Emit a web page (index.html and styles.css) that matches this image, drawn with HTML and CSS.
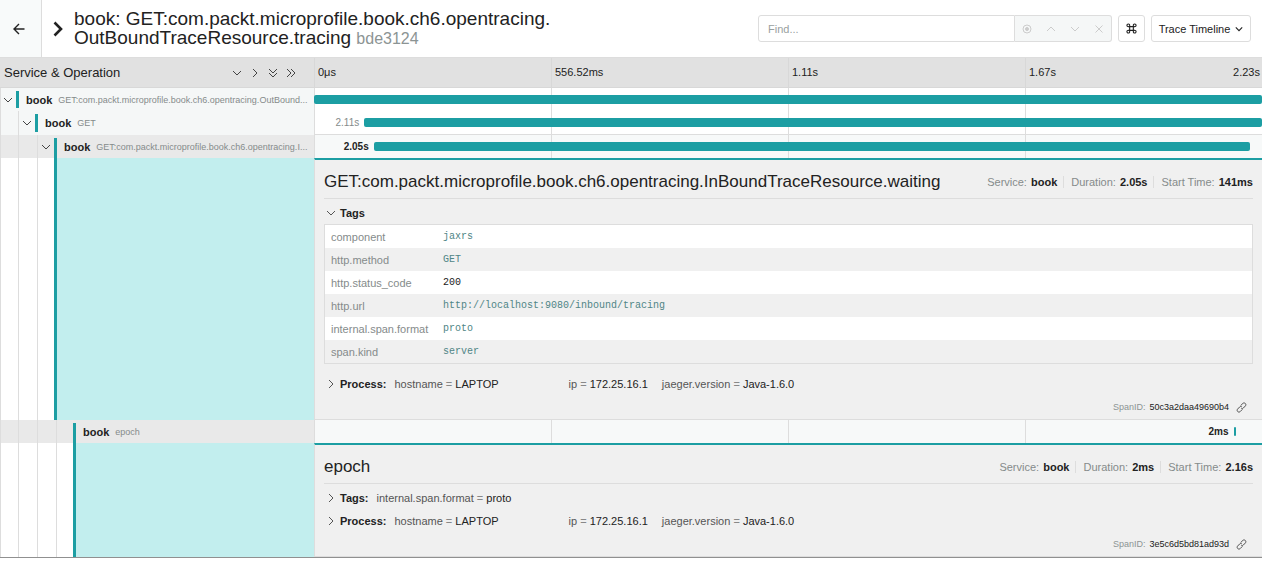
FILE: index.html
```html
<!DOCTYPE html>
<html lang="en">
<head>
<meta charset="utf-8">
<title>Trace bde3124</title>
<link rel="stylesheet" href="styles.css">
</head>
<body>
<svg class="sprite" aria-hidden="true">
  <symbol id="down" viewBox="0 0 10 10"><path d="M1 3l4 4 4-4"/></symbol>
  <symbol id="up" viewBox="0 0 10 10"><path d="M1 7l4-4 4 4"/></symbol>
  <symbol id="right" viewBox="0 0 10 10"><path d="M3 1l4 4-4 4"/></symbol>
  <symbol id="ddown" viewBox="0 0 10 10"><path d="M1 1l4 4 4-4M1 5l4 4 4-4"/></symbol>
  <symbol id="dright" viewBox="0 0 10 10"><path d="M1 1l4 4-4 4M5 1l4 4-4 4"/></symbol>
  <symbol id="link" viewBox="0 0 12 12"><path d="M5 4l2.500-2.500c1.800-1.500 4.300.8 2.800 2.700L8 6.600c-.8.700-1.700.7-2.400.1M7 8l-2.500 2.500c-1.800 1.500-4.300-.8-2.800-2.700L4 5.400c.8-.7 1.700-.7 2.400-.1"/></symbol>
</svg>
<header class="topbar">
  <a class="back" href="#" aria-label="Back"><svg class="icon-back" viewBox="0 0 12 12"><path d="M11.500 6H1M6 1L1 6l5 5"/></svg></a>
  <button class="expand" aria-label="Show trace details"><svg viewBox="0 0 10 16"><path d="M1.500 1.500L8 8l-6.500 6.500"/></svg></button>
  <h1 class="title">book: GET:com.packt.microprofile.book.ch6.opentracing.<wbr>OutBoundTraceResource.tracing <small class="trace-id">bde3124</small></h1>
  <div class="search">
    <input class="find" type="text" placeholder="Find..." aria-label="Find">
    <div class="find-actions">
      <button disabled aria-label="Focus matches"><svg viewBox="0 0 10 10"><circle cx="5" cy="5" r="4"/><circle class="dot" cx="5" cy="5" r="1.500"/></svg></button>
      <button disabled aria-label="Previous"><svg><use href="#up"/></svg></button>
      <button disabled aria-label="Next"><svg><use href="#down"/></svg></button>
      <button disabled aria-label="Clear"><svg viewBox="0 0 10 10"><path d="M1.500 1.500l7 7M8.500 1.500l-7 7"/></svg></button>
    </div>
  </div>
  <button class="btn keys" aria-label="Keyboard shortcuts"><svg viewBox="0 0 12 12"><path d="M4 4h4v4H4zM4 4H2.700A1.500 1.500 0 1 1 4 2.700zM8 4V2.700A1.500 1.500 0 1 1 9.300 4zM8 8h1.300A1.500 1.500 0 1 1 8 9.300zM4 8v1.300A1.500 1.500 0 1 1 2.700 8z"/></svg></button>
  <button class="btn view">Trace Timeline <svg><use href="#down"/></svg></button>
</header>

<main class="trace">
  <div class="row columns">
    <div class="name-head">
      <h2>Service &amp; Operation</h2>
      <div class="collapsers">
        <button aria-label="Expand one level"><svg><use href="#down"/></svg></button>
        <button aria-label="Collapse one level"><svg><use href="#right"/></svg></button>
        <button aria-label="Expand all"><svg><use href="#ddown"/></svg></button>
        <button aria-label="Collapse all"><svg><use href="#dright"/></svg></button>
      </div>
    </div>
    <div class="ticks"><span>0μs</span><span>556.52ms</span><span>1.11s</span><span class="last">1.67s<span>2.23s</span></span></div>
  </div>

  <div class="row span">
    <div class="name">
      <button class="toggle" aria-label="Collapse span"><svg><use href="#down"/></svg></button><i class="mark"></i>
      <a class="label" href="#"><b>book</b><small>GET:com.packt.microprofile.book.ch6.opentracing.OutBound...</small></a>
    </div>
    <div class="lane"><div class="bar" style="width:100%"></div></div>
  </div>
  <div class="row span ruled">
    <div class="name">
      <i class="guide"></i><button class="toggle" aria-label="Collapse span"><svg><use href="#down"/></svg></button><i class="mark"></i>
      <a class="label" href="#"><b>book</b><small>GET</small></a>
    </div>
    <div class="lane"><div class="lead" style="width:5.3%">2.11s</div><div class="bar" style="width:94.7%"></div></div>
  </div>
  <div class="row span open">
    <div class="name">
      <i class="guide"></i><i class="guide"></i><button class="toggle" aria-label="Collapse span"><svg><use href="#down"/></svg></button><i class="mark"></i>
      <a class="label" href="#"><b>book</b><small>GET:com.packt.microprofile.book.ch6.opentracing.I...</small></a>
    </div>
    <div class="lane"><div class="lead" style="width:6.3%">2.05s</div><div class="bar" style="width:92.4%"></div></div>
  </div>

  <div class="row detail-row">
    <div class="name detail-name"><i class="guide"></i><i class="guide"></i><i class="toggle"></i><i class="mark"></i><div class="tint"></div></div>
    <section class="detail">
      <div class="detail-head">
        <h3>GET:com.packt.microprofile.book.ch6.opentracing.InBoundTraceResource.waiting</h3>
        <ul class="facts"><li>Service: <b>book</b></li><li>Duration: <b>2.05s</b></li><li>Start Time: <b>141ms</b></li></ul>
      </div>
      <button class="fold" aria-expanded="true"><svg><use href="#down"/></svg><b>Tags</b></button>
      <table class="tags">
        <tr><th scope="row">component</th><td>jaxrs</td></tr>
        <tr><th scope="row">http.method</th><td>GET</td></tr>
        <tr><th scope="row">http.status_code</th><td class="number">200</td></tr>
        <tr><th scope="row">http.url</th><td>http://localhost:9080/inbound/tracing</td></tr>
        <tr><th scope="row">internal.span.format</th><td>proto</td></tr>
        <tr><th scope="row">span.kind</th><td>server</td></tr>
      </table>
      <button class="fold after-table" aria-expanded="false"><svg><use href="#right"/></svg><b>Process:</b><span class="host">hostname <i>=</i> <em>LAPTOP</em></span><span>ip <i>=</i> <em>172.25.16.1</em></span><span>jaeger.version <i>=</i> <em>Java-1.6.0</em></span></button>
      <div class="span-id">SpanID: <span>50c3a2daa49690b4</span><a href="#" aria-label="Link to span"><svg><use href="#link"/></svg></a></div>
    </section>
  </div>

  <div class="row span open">
    <div class="name">
      <i class="guide"></i><i class="guide"></i><i class="guide"></i><i class="toggle"></i><i class="mark"></i>
      <a class="label" href="#"><b>book</b><small>epoch</small></a>
    </div>
    <div class="lane"><div class="lead" style="width:97%">2ms</div><div class="bar" style="width:2px"></div></div>
  </div>
  <div class="row detail-row">
    <div class="name detail-name"><i class="guide"></i><i class="guide"></i><i class="guide"></i><i class="toggle"></i><i class="mark"></i><div class="tint"></div></div>
    <section class="detail">
      <div class="detail-head">
        <h3>epoch</h3>
        <ul class="facts"><li>Service: <b>book</b></li><li>Duration: <b>2ms</b></li><li>Start Time: <b>2.16s</b></li></ul>
      </div>
      <button class="fold" aria-expanded="false"><svg><use href="#right"/></svg><b>Tags:</b><span>internal.span.format <i>=</i> <em>proto</em></span></button>
      <button class="fold" aria-expanded="false"><svg><use href="#right"/></svg><b>Process:</b><span class="host">hostname <i>=</i> <em>LAPTOP</em></span><span>ip <i>=</i> <em>172.25.16.1</em></span><span>jaeger.version <i>=</i> <em>Java-1.6.0</em></span></button>
      <div class="span-id">SpanID: <span>3e5c6d5bd81ad93d</span><a href="#" aria-label="Link to span"><svg><use href="#link"/></svg></a></div>
    </section>
  </div>
</main>
</body>
</html>
```
FILE: styles.css
```css
* { box-sizing: border-box; }
body {
  margin: 0;
  background: #fff;
  color: #222;
  font-family: "Liberation Sans", Arial, sans-serif;
  font-size: 11px;
}
h1, h2, h3, ul { margin: 0; padding: 0; font-weight: 400; }
ul { list-style: none; }
i, em { font-style: normal; }
a { color: inherit; text-decoration: none; }
button { margin: 0; padding: 0; border: 0; background: none; color: inherit; font: inherit; }
svg { flex: none; width: 10px; height: 10px; fill: none; stroke: currentColor; stroke-width: 1; }
.sprite { display: none; }

/* Top bar */
.topbar { display: flex; align-items: center; min-height: 58px; padding-right: 11px; border-bottom: 1px solid #ddd; }
.back { display: flex; align-self: stretch; align-items: center; justify-content: center; width: 42px; padding-right: 3px; background: #f8fafa; border-right: 1px solid #ddd; }
.back svg { width: 12px; height: 12px; stroke-width: 1.4; }
.expand { display: flex; justify-content: center; width: 32px; }
.expand svg { width: 10px; height: 16px; stroke-width: 2.6; }
.title { flex: 1; font-size: 19px; line-height: 19px; }
.trace-id { color: #8c9494; font-size: 16px; }
.search { display: flex; height: 27px; }
.find { width: 257px; padding: 0 9px; border: 1px solid #ddd; border-radius: 3px 0 0 3px; background: #fff; font: inherit; outline: 0; }
.find::placeholder { color: #9a9f9f; }
.find-actions { display: flex; border: 1px solid #ddd; border-left: 0; border-radius: 0 3px 3px 0; background: #f5f7f7; }
.find-actions button { display: flex; align-items: center; justify-content: center; width: 24px; color: #ccc; }
.find-actions .dot { fill: currentColor; }
.btn { display: flex; align-items: center; justify-content: center; height: 27px; margin-left: 6px; border: 1px solid #ddd; border-radius: 3px; }
.keys { width: 27px; }
.keys svg { width: 11px; height: 11px; stroke-width: 1.2; }
.view { gap: 5px; width: 100px; }
.view svg { width: 8px; height: 8px; stroke-width: 1.4; }

/* Rows shared by every line of the trace */
.trace { border-bottom: 1px solid #909090; }
.row { display: grid; grid-template-columns: 314px minmax(0, 1fr); }
.columns { height: 30px; background: #e1e1e1; border-bottom: 1px solid #d8d8d8; }
.name-head { display: flex; align-items: center; justify-content: space-between; padding: 0 18px 0 4px; }
.name-head h2 { font-size: 13px; }
.collapsers { display: flex; gap: 8px; color: #444; }
.collapsers button { display: flex; }
.ticks { display: grid; grid-template-columns: repeat(4, 1fr); align-items: center; }
.ticks > span { padding-left: 3px; border-left: 1px solid #d8d8d8; line-height: 29px; }
.ticks .last { display: flex; justify-content: space-between; padding-right: 2px; }

.span { height: 23px; }
.name { display: flex; min-width: 0; border-left: 1px solid #ddd; background: #f5f7f7; }
.guide { flex: none; width: 19px; border-right: 1px solid #ddd; }
.name > :first-child { margin-left: -1px; }
.toggle { display: flex; flex: none; align-items: center; justify-content: center; width: 16px; color: #444; }
.mark { flex: none; width: 3px; margin: 3px 0; background: #1c9ea3; }
.open .mark { margin-bottom: 0; }
.label { display: flex; flex: 1; align-items: center; min-width: 0; padding-left: 7px; }
.label small { margin-left: 6px; color: #858b8b; font-size: 9px; white-space: nowrap; }
.lane {
  display: flex;
  align-items: center;
  background-image: repeating-linear-gradient(to right, #ddd 0 1px, transparent 1px 25%);
}
.bar { flex: none; height: 9px; background: #1c9ea3; border-radius: 2px; }
.lead { flex: none; padding-right: 5px; color: #858b8b; font-size: 10px; text-align: right; }
.ruled { height: 24px; }
.ruled .lane { border-bottom: 1px solid #ddd; }
.open .name { background: #e9e9e9; }
.open .lane { background-color: #f7f9f9; }
.open .lead { color: #222; font-weight: 700; }

/* Span detail */
.detail-name { background: #fff; }
.detail-name .mark { margin: 0; }
.tint { flex: 1; background: #c2eeee; }
.detail { padding: 0 9px 0 10px; background: #f0f0f0; border-top: 2px solid #1c9ea3; border-left: 1px solid #ddd; border-bottom: 1px solid #ddd; padding-left: 9px; }
.detail-head { display: flex; align-items: center; justify-content: space-between; height: 39px; padding-top: 6px; border-bottom: 1px solid #ddd; margin-bottom: 2px; }
.detail-head h3 { font-size: 17px; }
.facts { display: flex; color: #858b8b; }
.facts li + li { margin-left: 6px; padding-left: 7px; border-left: 1px solid #ddd; }
.facts b { margin-left: 1px; color: #222; }
.fold { display: flex; align-items: center; height: 23px; padding-left: 2px; color: #555; }
.fold b { margin: 0 8px 0 4px; color: #222; }
.fold span { margin-right: 14px; }
.fold .host { margin-right: 70px; }
.fold em { color: #222; }
.fold i { color: #888; }
.tags { width: 100%; border: 1px solid #ddd; border-spacing: 0; }
.tags tr { height: 23px; }
.tags tr:nth-child(odd) { background: #fff; }
.tags th, .tags td { padding: 0 6px; text-align: left; }
.tags th { width: 112px; color: #858b8b; font-weight: 400; }
.tags td { color: #4f8586; font-family: "Liberation Mono", monospace; font-size: 10px; }
.tags .number { color: #222; }
.after-table { margin-top: 8px; }
.span-id { display: flex; align-items: center; justify-content: flex-end; height: 24px; padding-right: 6px; color: #8c9494; font-size: 9px; }
.span-id span { margin: 0 7px 0 4px; color: #222; }
.span-id a { display: flex; color: #444; }
.span-id svg { width: 11px; height: 11px; }
```
